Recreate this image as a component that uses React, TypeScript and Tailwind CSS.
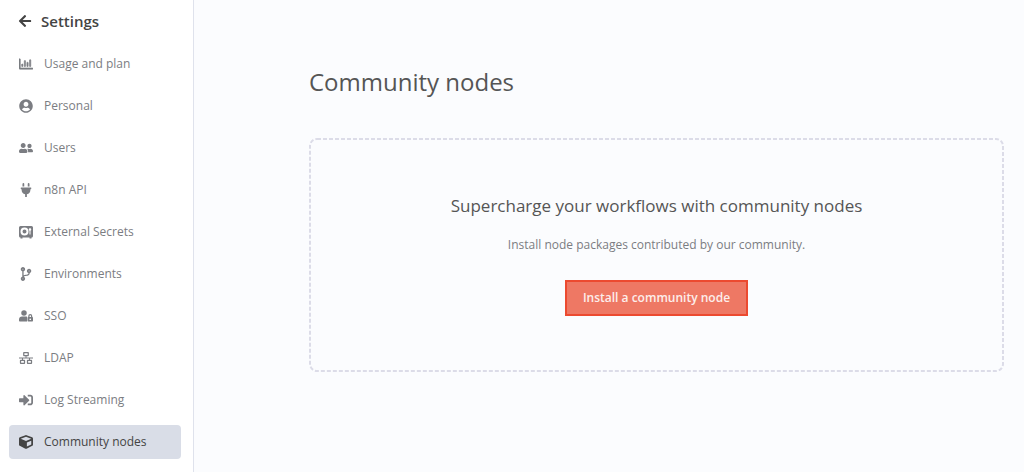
import type { ReactNode } from 'react';
import {
  FaArrowLeft,
  FaCodeBranch,
  FaCube,
  FaPlug,
  FaRegChartBar,
  FaSignInAlt,
  FaUserCircle,
  FaUserFriends,
} from 'react-icons/fa';

interface NavItem {
  label: string;
  icon: ReactNode;
}

function VaultIcon() {
  return (
    <svg width="14" height="14" viewBox="0 0 28 28" fill="currentColor">
      <path
        fillRule="evenodd"
        d="M3 2h22a3 3 0 0 1 3 3v17a3 3 0 0 1-3 3v2h-4v-2H7v2H3v-2a3 3 0 0 1-3-3V5a3 3 0 0 1 3-3Zm8 3a8 8 0 1 0 0 16a8 8 0 0 0 0-16Zm0 4a4 4 0 1 1 0 8a4 4 0 0 1 0-8Zm11-3a3 3 0 0 0-1 5.500V19h2v-7.500A3 3 0 0 0 22 6Z"
      />
    </svg>
  );
}

function UserLockIcon() {
  return (
    <svg width="14" height="14" viewBox="0 0 28 28" fill="currentColor">
      <circle cx="10" cy="8" r="5.500" />
      <path d="M6 15h8c1 0 1.500.2 2 .5V25H1.500A1.500 1.500 0 0 1 0 23.500V21c0-3.500 2.500-6 6-6Z" />
      <path
        fillRule="evenodd"
        d="M18.500 16v-2a4 4 0 0 1 8 0v2a1.500 1.500 0 0 1 1.500 1.500v6a1.500 1.500 0 0 1-1.500 1.500h-8a1.500 1.500 0 0 1-1.500-1.500v-6a1.500 1.500 0 0 1 1.500-1.500Zm2.500 0h3v-2a1.500 1.500 0 0 0-3 0v2Zm1.500 2.800a1.700 1.700 0 1 0 0 3.400a1.700 1.700 0 0 0 0-3.400Z"
      />
    </svg>
  );
}

function NetworkIcon() {
  return (
    <svg width="14" height="14" viewBox="0 0 28 28" fill="none" stroke="currentColor" strokeWidth="2.500">
      <rect x="9.500" y="3" width="9" height="6" rx="0.500" />
      <rect x="3" y="18.500" width="8" height="6" rx="0.500" />
      <rect x="17" y="18.500" width="8" height="6" rx="0.500" />
      <path d="M14 9v5M0 14h28M7 14v4.500M21 14v4.500" strokeWidth="2" />
    </svg>
  );
}

const items: NavItem[] = [
  { label: 'Usage and plan', icon: <FaRegChartBar size={14} strokeWidth={20} /> },
  { label: 'Personal', icon: <FaUserCircle size={14} /> },
  { label: 'Users', icon: <FaUserFriends size={14} /> },
  { label: 'n8n API', icon: <FaPlug size={14} /> },
  { label: 'External Secrets', icon: <VaultIcon /> },
  { label: 'Environments', icon: <FaCodeBranch size={14} /> },
  { label: 'SSO', icon: <UserLockIcon /> },
  { label: 'LDAP', icon: <NetworkIcon /> },
  { label: 'Log Streaming', icon: <FaSignInAlt size={14} /> },
  { label: 'Community nodes', icon: <FaCube size={14} /> },
];

function Sidebar({ active }: { active: string }) {
  return (
    <aside className="w-[194px] shrink-0 border-r border-[#dfe2ec] bg-white pl-[9px] pr-3 pt-[7px]">
      <a href="#back" className="flex h-7 items-center gap-[9px] pl-[9px] text-[15px] font-semibold text-[#444]">
        <FaArrowLeft size={14} />
        <span>Settings</span>
      </a>
      <nav className="mt-3 flex flex-col gap-2">
        {items.map(({ label, icon }) => (
          <a
            key={label}
            href="#settings"
            aria-current={label === active ? 'page' : undefined}
            className={`flex h-[34px] items-center gap-[10px] rounded pl-[9px] text-xs ${
              label === active ? 'bg-[#d9dde7] text-[#444]' : 'text-[#7b7d82] hover:text-[#444]'
            }`}
          >
            <span className="flex w-4 justify-center">{icon}</span>
            <span>{label}</span>
          </a>
        ))}
      </nav>
    </aside>
  );
}

function DashedOutline() {
  return (
    <svg className="pointer-events-none absolute inset-0 h-full w-full overflow-visible p-px" aria-hidden="true">
      <rect
        width="100%"
        height="100%"
        rx="7"
        fill="none"
        stroke="#dcdce8"
        strokeWidth="2"
        strokeDasharray="4 2"
      />
    </svg>
  );
}

export default function App() {
  return (
    <div className="flex min-h-screen bg-[#fbfcfe] font-['Open_Sans','Noto_Sans',sans-serif]">
      <Sidebar active="Community nodes" />
      <main className="flex-1 pl-[115px] pr-5 pt-16">
        <h1 className="text-2xl leading-9 text-[#555]">Community nodes</h1>
        <section className="relative mt-[38px] flex flex-col items-center px-6 py-14">
          <DashedOutline />
          <h2 className="text-[17px] leading-6 text-[#555]">Supercharge your workflows with community nodes</h2>
          <p className="mt-[17px] text-xs leading-5 text-[#7b7d82]">
            Install node packages contributed by our community.
          </p>
          <button
            type="button"
            className="mt-[25px] h-9 border-2 border-[#ec4a30] bg-[#ee7864] px-4 text-xs font-semibold text-[#fdeeeb]"
          >
            Install a community node
          </button>
        </section>
      </main>
    </div>
  );
}
